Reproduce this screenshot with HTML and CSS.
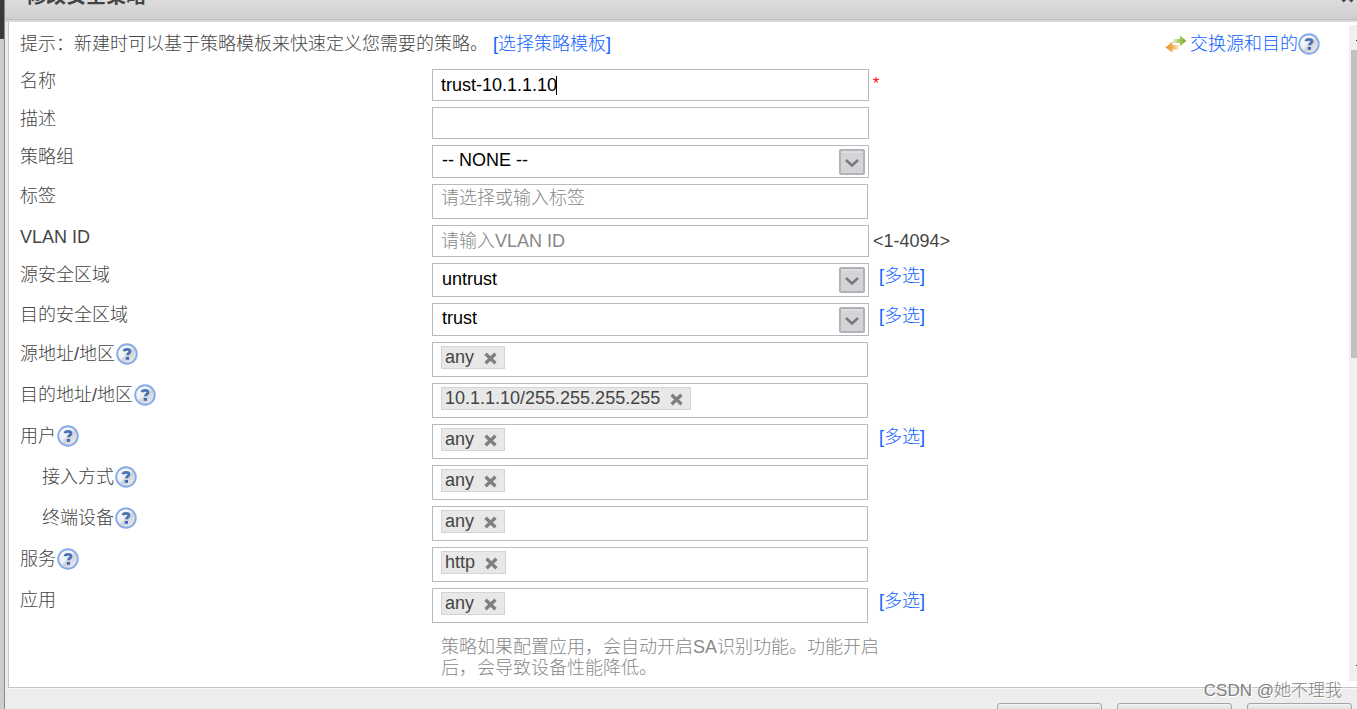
FILE: index.html
```html
<!DOCTYPE html>
<html lang="zh-CN">
<head>
<meta charset="utf-8">
<title>修改安全策略</title>
<link rel="stylesheet" href="styles.css">
</head>
<body>
<svg class="defs" aria-hidden="true">
  <defs>
    <linearGradient id="glass" x1="0" y1="0" x2="1" y2="1">
      <stop offset="0" stop-color="#fff"/><stop offset=".45" stop-color="#eef0f4"/><stop offset=".55" stop-color="#cfd2d8"/><stop offset="1" stop-color="#f4f5f8"/>
    </linearGradient>
    <linearGradient id="green" x1="0" x2="1"><stop offset="0" stop-color="#e8f0d4"/><stop offset=".5" stop-color="#a3c65c"/><stop offset="1" stop-color="#7fa83a"/></linearGradient>
    <linearGradient id="orange" x1="0" x2="1"><stop offset="0" stop-color="#e5922e"/><stop offset=".5" stop-color="#f2ac4c"/><stop offset="1" stop-color="#fdeed8"/></linearGradient>
  </defs>
  <symbol id="help" viewBox="0 0 22 22">
    <circle cx="11" cy="11" r="9.8" fill="url(#glass)" stroke="#86abe8" stroke-width="1.9"/>
    <path d="M8 8.300C8.200 6.800 9.400 6.400 11 6.400c1.900 0 3 .7 3 2 0 1.800-2.500 1.800-2.500 3.900" fill="none" stroke="#4a73b4" stroke-width="2.800"/>
    <rect x="9.800" y="14" width="3.200" height="2.800" fill="#3d68b0"/>
  </symbol>
  <symbol id="cross" viewBox="0 0 13 13">
    <path d="M1.500 1.800 11.500 11.200M11.500 1.800 1.500 11.200" fill="none" stroke="currentColor" stroke-width="3.300"/>
  </symbol>
  <symbol id="arrow" viewBox="0 0 26 26">
    <rect x="1" y="1" width="24" height="24" rx="1" fill="#d3d4d6" stroke="#b2b3b8" stroke-width="2"/>
    <path d="M2.500 3h21" stroke="#e6e6e8"/>
    <path d="M7 11l6 5.500L19 11" fill="none" stroke="#77777b" stroke-width="2.400"/>
  </symbol>
  <symbol id="swap" viewBox="0 0 22 18">
    <path d="M8 4h7V.5l6.500 5.500L15 11V8H8z" fill="url(#green)"/>
    <path d="M14 10H7.500V6.500L.5 12.500 7.500 17.500V14.500H14z" fill="url(#orange)"/>
  </symbol>
</svg>
<div class="backdrop"></div>
<main class="dialog">
  <header class="titlebar">
    <h1 class="title">修改安全策略</h1>
    <button class="close" aria-label="关闭"><svg width="13" height="13"><use href="#cross"/></svg></button>
  </header>
  <div class="content">
    <form class="form" id="policy">
      <div class="hint">
        <p class="hint-text">提示：新建时可以基于策略模板来快速定义您需要的策略。 <a href="#">[选择策略模板]</a></p>
        <a class="swap" href="#"><svg width="22" height="18"><use href="#swap"/></svg>交换源和目的</a>
        <button type="button" class="help" aria-label="帮助"><svg><use href="#help"/></svg></button>
      </div>
      <div class="row"><label class="label" for="name">名称</label><div class="field"><input class="input" id="name" value="trust-10.1.1.10"><i class="caret"></i></div><span class="required">*</span></div>
      <div class="row"><label class="label" for="desc">描述</label><div class="field"><input class="input" id="desc"></div></div>
      <div class="row"><label class="label" for="group">策略组</label><div class="field"><select class="input select" id="group"><option>-- NONE --</option></select><svg class="arrow"><use href="#arrow"/></svg></div></div>
      <div class="row"><label class="label" for="tag">标签</label><div class="field short"><input class="input tall" id="tag" placeholder="请选择或输入标签"></div></div>
      <div class="row"><label class="label" for="vlan">VLAN ID</label><div class="field"><input class="input" id="vlan" placeholder="请输入VLAN ID"></div><span class="range">&lt;1-4094&gt;</span></div>
      <div class="row"><label class="label" for="srczone">源安全区域</label><div class="field"><select class="input select zone" id="srczone"><option>untrust</option></select><svg class="arrow"><use href="#arrow"/></svg></div><a class="multi" href="#">[多选]</a></div>
      <div class="row"><label class="label" for="dstzone">目的安全区域</label><div class="field"><select class="input select" id="dstzone"><option>trust</option></select><svg class="arrow"><use href="#arrow"/></svg></div><a class="multi" href="#">[多选]</a></div>
      <div class="row"><div class="label">源地址/地区<button type="button" class="help" aria-label="帮助"><svg><use href="#help"/></svg></button></div><div class="tags"><span class="tag">any<button type="button" class="remove" aria-label="移除"><svg><use href="#cross"/></svg></button></span></div></div>
      <div class="row"><div class="label">目的地址/地区<button type="button" class="help" aria-label="帮助"><svg><use href="#help"/></svg></button></div><div class="tags"><span class="tag">10.1.1.10/255.255.255.255<button type="button" class="remove" aria-label="移除"><svg><use href="#cross"/></svg></button></span></div></div>
      <div class="row"><div class="label">用户<button type="button" class="help" aria-label="帮助"><svg><use href="#help"/></svg></button></div><div class="tags"><span class="tag">any<button type="button" class="remove" aria-label="移除"><svg><use href="#cross"/></svg></button></span></div><a class="multi" href="#">[多选]</a></div>
      <div class="row"><div class="label sub">接入方式<button type="button" class="help" aria-label="帮助"><svg><use href="#help"/></svg></button></div><div class="tags"><span class="tag">any<button type="button" class="remove" aria-label="移除"><svg><use href="#cross"/></svg></button></span></div></div>
      <div class="row"><div class="label sub">终端设备<button type="button" class="help" aria-label="帮助"><svg><use href="#help"/></svg></button></div><div class="tags"><span class="tag">any<button type="button" class="remove" aria-label="移除"><svg><use href="#cross"/></svg></button></span></div></div>
      <div class="row"><div class="label">服务<button type="button" class="help" aria-label="帮助"><svg><use href="#help"/></svg></button></div><div class="tags"><span class="tag">http<button type="button" class="remove" aria-label="移除"><svg><use href="#cross"/></svg></button></span></div></div>
      <div class="row"><div class="label">应用</div><div class="tags"><span class="tag">any<button type="button" class="remove" aria-label="移除"><svg><use href="#cross"/></svg></button></span></div><a class="multi" href="#">[多选]</a></div>
      <div class="row"><p class="note">策略如果配置应用，会自动开启SA识别功能。功能开启后，会导致设备性能降低。</p></div>
    </form>
    <div class="scrollbar"><i class="tick"></i><div class="thumb"></div><i class="tick end"></i></div>
  </div>
  <footer class="footer">
    <button class="action" aria-label="确定"></button>
    <button class="action wide" aria-label="复制"></button>
    <button class="action" aria-label="取消"></button>
  </footer>
</main>
<div class="watermark">CSDN @她不理我</div>
</body>
</html>
```
FILE: styles.css
```css
* { box-sizing: border-box; }
body {
  display: flex;
  height: 100vh;
  margin: 0;
  overflow: hidden;
  background: #ededed;
  color: #444;
  font: 300 18px/24px "Liberation Sans", "Noto Sans CJK SC", sans-serif;
}
.defs { position: absolute; width: 0; height: 0; }
a { color: #0f62ff; text-decoration: none; }
p { margin: 0; }
button { padding: 0; border: 0; background: none; font: inherit; }
svg { display: block; }

.backdrop {
  width: 4px;
  background: linear-gradient(#3a3a3a 39px, #cdcdcd 39px);
}
.dialog {
  flex: 1;
  min-width: 0;
  display: flex;
  flex-direction: column;
  height: 100vh;
  overflow: hidden;
  border-left: 1px solid #888;
}
.titlebar {
  flex: none;
  display: flex;
  align-items: flex-start;
  justify-content: space-between;
  height: 22px;
  padding-left: 21px;
  overflow: hidden;
  background: linear-gradient(#dcdcdc, #cecece 19px, #bdbdbd 19px, #bdbdbd 20px, #d8d8d8 20px);
}
.title { margin: -16px 0 0; font-size: 20px; line-height: 24px; color: #444; }
.close { height: 13px; margin: -10px 3px 0 0; color: #444; }
.content {
  flex: none;
  display: flex;
  height: calc(100vh - 43px);
  margin-left: 3px;
  padding-bottom: 6px;
  border: solid #c4c4c4;
  border-width: 0 0 1px 1px;
  background: #fff;
}
.form {
  flex: 1;
  min-width: 0;
  display: flex;
  flex-direction: column;
  gap: 6px;
  padding: 9px 0 0 11px;
  overflow: hidden;
}
.hint { display: flex; align-items: center; height: 32px; padding: 0 29px 6px 0; }
.hint-text { flex: 1; }
.swap { display: flex; align-items: center; gap: 3px; }
.row {
  display: grid;
  grid-template-columns: 31% minmax(0, 437px) 1fr;
  align-items: start;
}
.label { display: flex; align-items: center; height: 24px; }
.label .help { margin-left: 1px; }
.sub { padding-left: 22px; }
.help, .help svg { width: 22px; height: 22px; }
.field { position: relative; }
.short { margin-right: 1px; }
.input {
  display: block;
  width: 100%;
  height: 32px;
  padding: 0 8px;
  border: 1px solid #b9bac0;
  border-radius: 0;
  outline: 0;
  background: #fff;
  color: #000;
  font: inherit;
}
.input::placeholder { color: #888; opacity: 1; }
.tall { height: 35px; padding-bottom: 6px; }
.select { height: 33px; padding: 0 9px 3px; appearance: none; }
.zone { height: 34px; }
.arrow {
  position: absolute;
  top: 4px;
  right: 4px;
  width: 26px;
  height: 26px;
  pointer-events: none;
}
.caret { position: absolute; top: 7px; left: 124px; width: 1px; height: 19px; background: #000; }
.required { padding: 3px 0 0 4px; color: #f00; font-size: 16px; }
.range { padding: 4px 0 0 4px; }
.multi { padding: 1px 0 0 10px; }
.tags {
  height: 35px;
  margin-right: 1px;
  padding: 3px 8px;
  border: 1px solid #b9bac0;
}
.tag {
  display: inline-flex;
  gap: 10px;
  height: 23px;
  padding: 0 7px 0 3px;
  border: 1px solid #d4d4d4;
  background: #e8e8e8;
  line-height: 20px;
  vertical-align: top;
}
.remove { height: 13px; margin-top: 5px; color: #7f7f7f; }
.remove svg { width: 13px; height: 13px; }
.note {
  grid-column: 2 / 4;
  max-width: 448px;
  margin-top: 8px;
  padding-left: 9px;
  color: #888;
  line-height: 21px;
}
.scrollbar {
  display: flex;
  flex-direction: column;
  width: 8px;
  margin-top: 3px;
  padding-left: 2px;
  background: #f0f0f0;
}
.tick { width: 1px; height: 1px; margin: 15px 0 9px 5px; background: #333; }
.end { margin: auto 0 15px 5px; }
.thumb { height: 47%; background: #c1c1c1; }
.footer {
  flex: none;
  display: flex;
  justify-content: flex-end;
  gap: 15px;
  padding: 14px 5px 0 0;
  border-top: 1px solid #f8f8f8;
}
.action {
  width: 105px;
  height: 30px;
  border: 1px solid #a3a3ad;
  border-radius: 3px;
  background: linear-gradient(#f2f2f2, #dedede 6px, #d4d4d4);
}
.wide { width: 115px; }
.watermark {
  position: absolute;
  right: 15px;
  bottom: 6px;
  color: #808080;
  font-size: 17px;
  text-shadow: 1px 1px #fff;
}
```
